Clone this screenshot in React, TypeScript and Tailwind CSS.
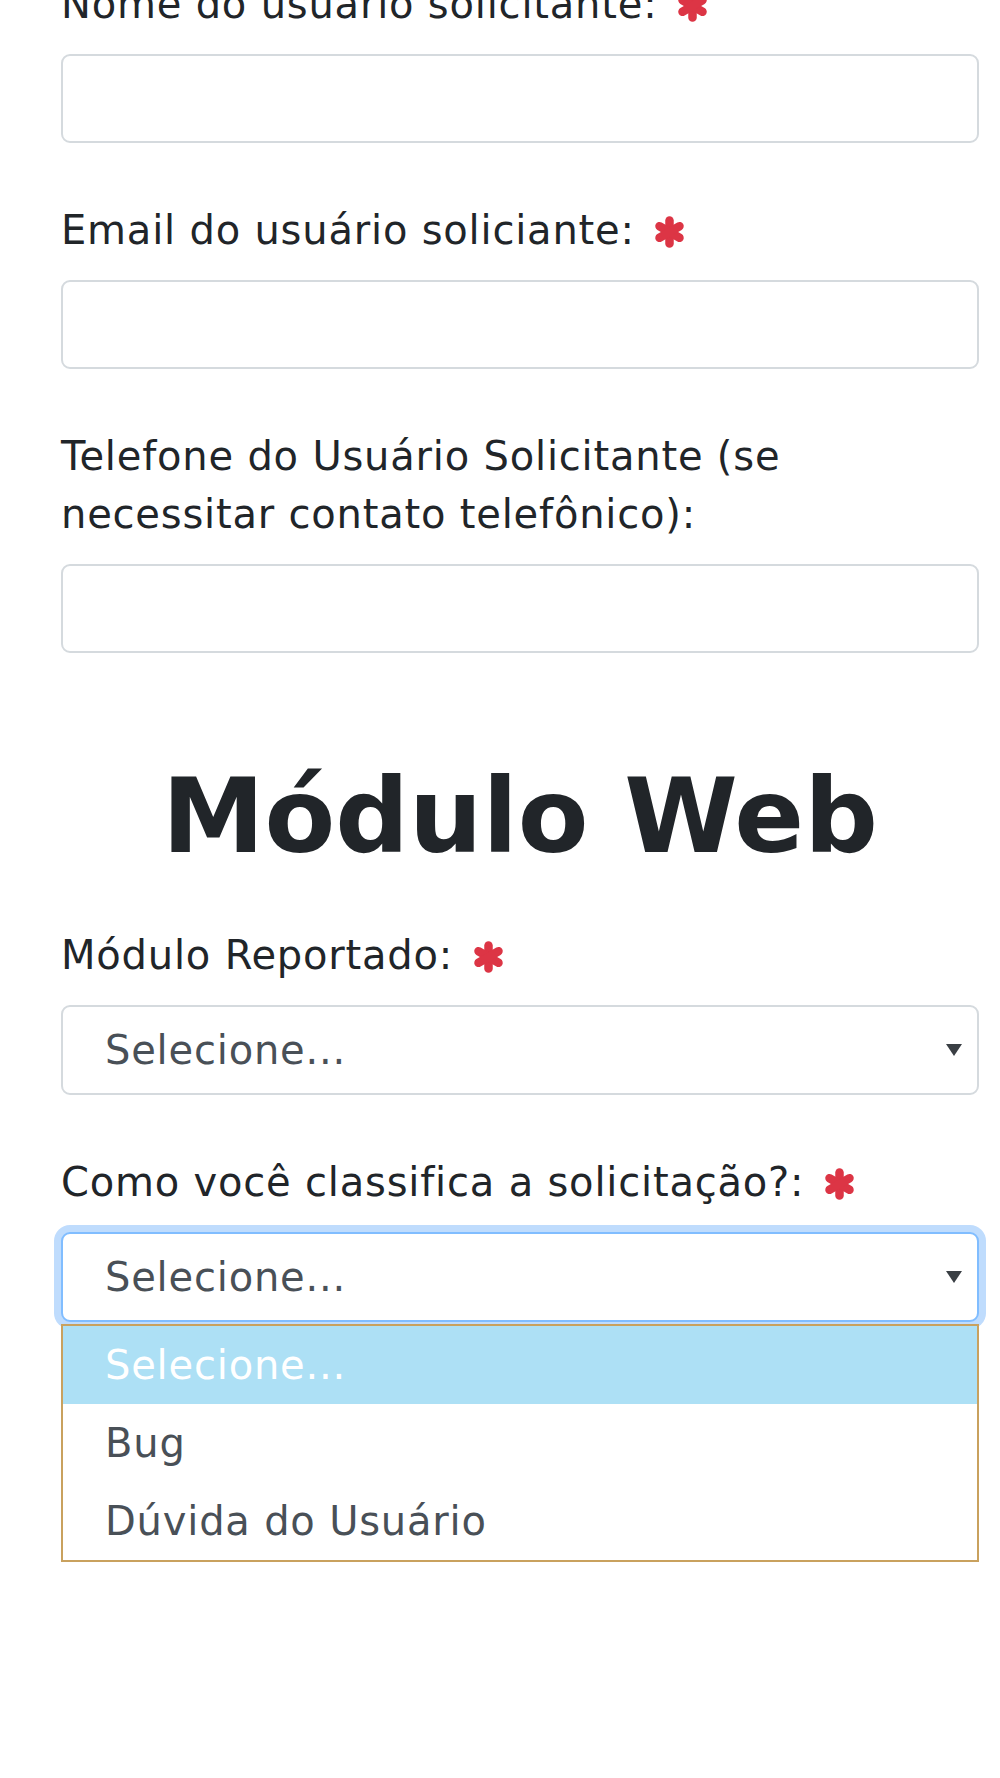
import React from "react";

const Asterisk = () => (
  <svg
    viewBox="0 0 32 32"
    className="inline-block w-[33px] h-[32px] align-[-4px] ml-[5px]"
  >
    <g stroke="#dc3545" strokeWidth="8.5" strokeLinecap="round">
      <line x1="16" y1="4.5" x2="16" y2="27.5" />
      <line x1="6" y1="10.2" x2="26" y2="21.8" />
      <line x1="6" y1="21.8" x2="26" y2="10.2" />
    </g>
  </svg>
);

const Label = ({
  children,
  required,
  className = "",
}: {
  children: React.ReactNode;
  required?: boolean;
  className?: string;
}) => (
  <label
    className={
      "block mb-[21px] text-[40px] leading-[58px] tracking-[0.8px] text-[#212529] " +
      className
    }
  >
    {children}
    {required && (
      <>
        {" "}
        <Asterisk />
      </>
    )}
  </label>
);

const TextInput = () => (
  <input
    type="text"
    className="block h-[89px] w-full rounded-[9px] border-2 border-[#d5dade] bg-white outline-none"
  />
);

const Arrow = () => (
  <svg viewBox="0 0 16 12" className="w-[16px] h-[12px] shrink-0">
    <path d="M0 0 H16 L8 12 Z" fill="#3a3f44" />
  </svg>
);

const FakeSelect = ({ focused }: { focused?: boolean }) => (
  <div
    className={
      focused
        ? "flex h-[90px] w-full items-center justify-between rounded-[9px] border-2 border-[#80bdff] bg-white pl-[42px] pr-[15px] shadow-[0_0_0_7px_#bfdcfd]"
        : "flex h-[90px] w-full items-center justify-between rounded-[9px] border-2 border-[#d5dade] bg-white pl-[42px] pr-[15px]"
    }
  >
    <span className="text-[40px] leading-none tracking-[0.8px] text-[#495057]">
      Selecione...
    </span>
    <Arrow />
  </div>
);

const options = ["Selecione...", "Bug", "Dúvida do Usuário"];

export default function App() {
  return (
    <div className="flex min-h-[1778px] flex-col bg-white pl-[61px] pr-[21px] font-['DejaVu_Sans',sans-serif]">
      <Label required className="-mt-[25px]">
        Nome do usuário solicitante:
      </Label>
      <TextInput />

      <Label required className="mt-[58px]">
        Email do usuário soliciante:
      </Label>
      <TextInput />

      <Label className="mt-[58px]">
        Telefone do Usuário Solicitante (se necessitar contato telefônico):
      </Label>
      <TextInput />

      <h1 className="mt-[100px] mb-[47px] text-center text-[103px] font-bold leading-[126px] text-[#212529]">
        Módulo Web
      </h1>

      <Label required>Módulo Reportado:</Label>
      <FakeSelect />

      <Label required className="mt-[58px]">
        Como você classifica a solicitação?:
      </Label>
      <FakeSelect focused />

      {/* lista aberta do select */}
      <div className="relative z-10 mt-[2px] border-2 border-[#c9a15e] bg-white">
        {options.map((opt, i) => (
          <div
            key={opt}
            className={
              i === 0
                ? "h-[78px] bg-[#ade0f5] pl-[42px] text-[40px] leading-[78px] tracking-[0.8px] text-white"
                : "h-[78px] pl-[42px] text-[40px] leading-[78px] tracking-[0.8px] text-[#495057]"
            }
          >
            {opt}
          </div>
        ))}
      </div>
    </div>
  );
}
